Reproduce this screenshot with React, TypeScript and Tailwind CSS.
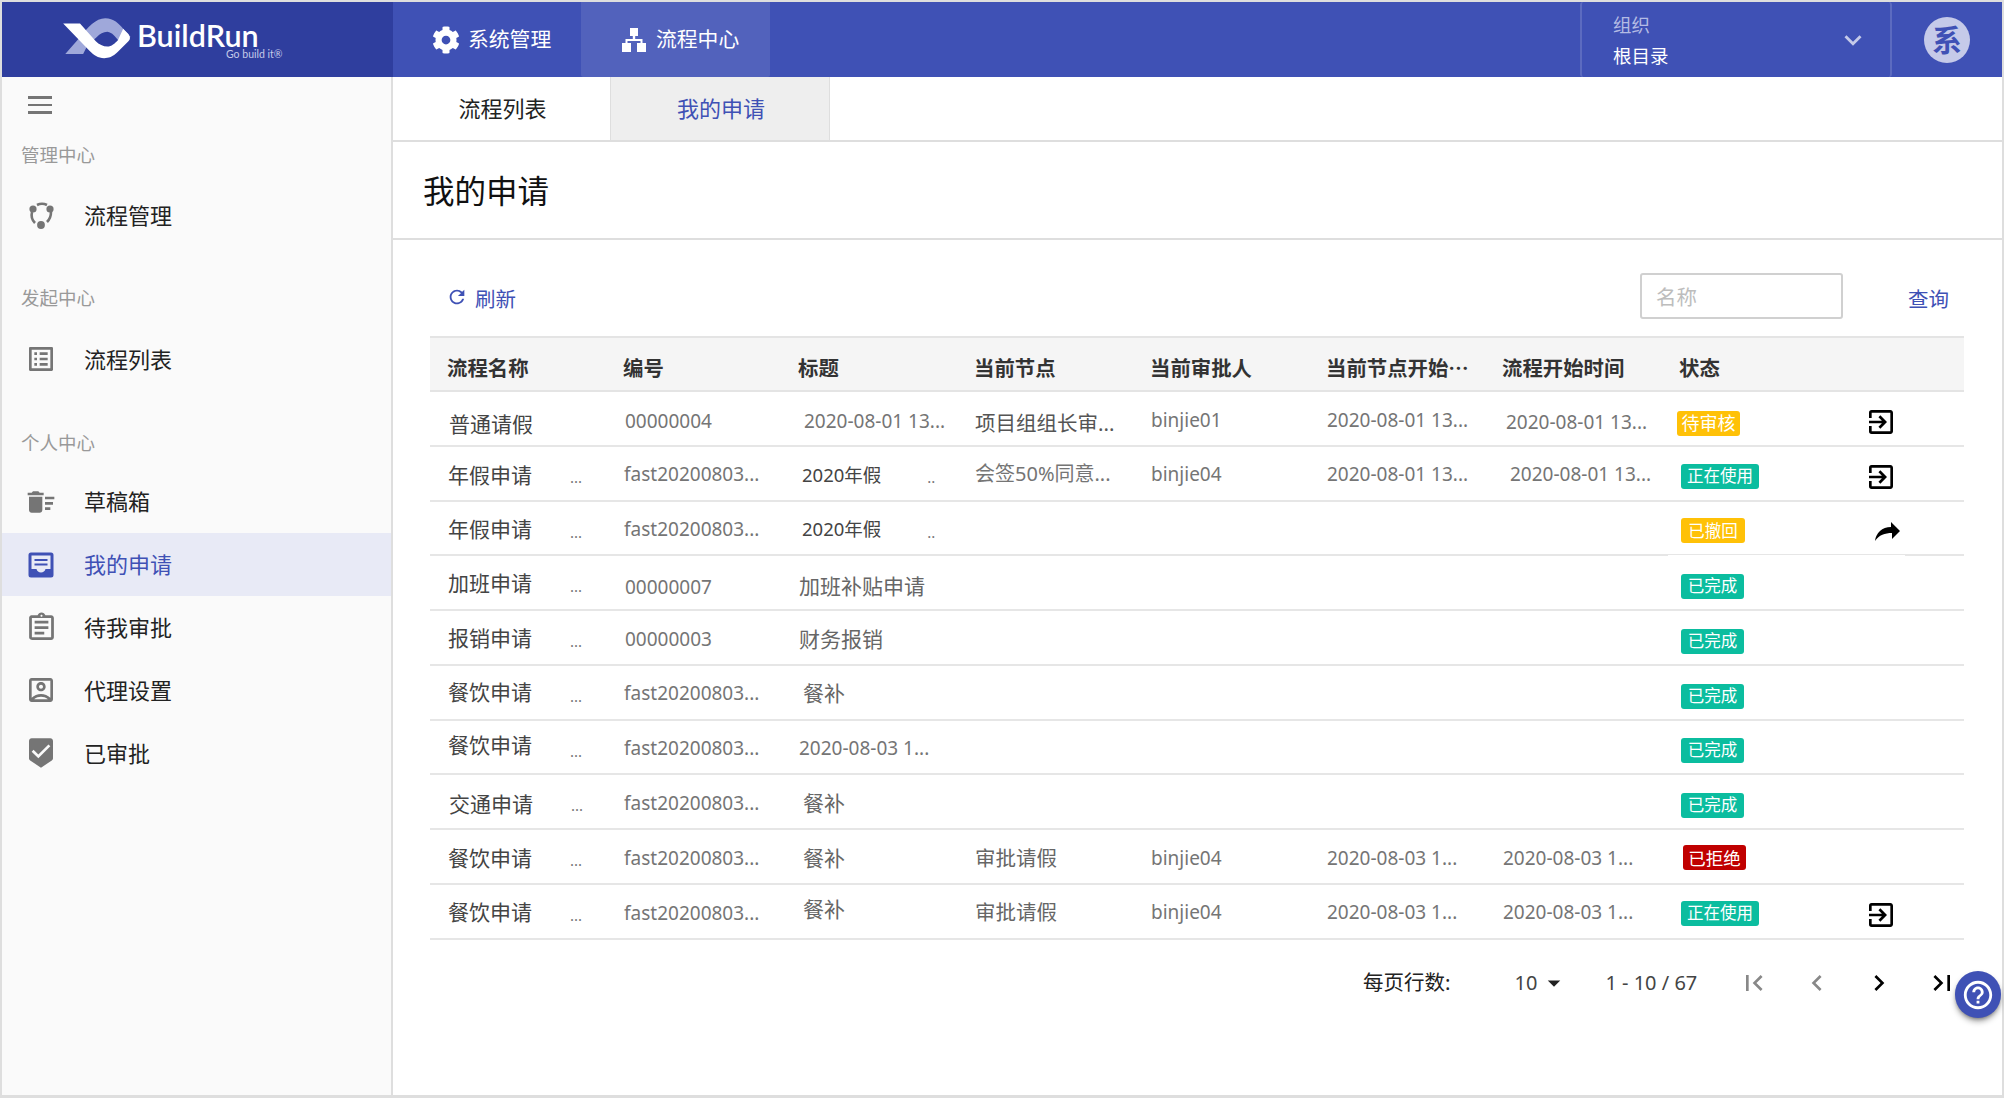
import { FaCog } from "react-icons/fa"
import {
  MdArrowDropDown,
  MdBeenhere,
  MdChevronLeft,
  MdChevronRight,
  MdDeleteSweep,
  MdExitToApp,
  MdExpandMore,
  MdFirstPage,
  MdHelpOutline,
  MdLastPage,
  MdOutlineAccountBox,
  MdOutlineAssignment,
  MdOutlineListAlt,
  MdRefresh,
} from "react-icons/md"

const font = "font-['Noto_Sans','Noto_Sans_CJK_SC',sans-serif]"

const LogoMark = () => (
  <svg viewBox="2 2 76 47.5" className="h-[50px] w-[80px] shrink-0">
    <path
      fill="#9fa8da"
      d="M7 39 L22 22 C28 14 36 5 45 5 C53 5 58 10 62 15 L69 23 L58 27 C54 22 52 19 47 18 C43 18 40 20 37 23 L28 31 L24 39 Z"
    />
    <path
      fill="#fff"
      d="M5 10 L21 10 L36 27 C39 30 43 32 47 32 C51 32 54 29 57 26 L62 15 L67 20 C69 23 69 25 67 27 L57 37 C52 42 48 43 44 43 C38 43 34 40 30 36 Z"
    />
  </svg>
)

const SitemapIcon = () => (
  <svg viewBox="0 0 24 24" className="h-[24px] w-[24px] shrink-0" fill="#fff">
    <path d="M8 0 H16 V8 H13.2 V11 H20.5 V15 H24 V24 H15 V15 H18.5 V13 H5.5 V15 H9 V24 H0 V15 H3.5 V11 H10.8 V8 H8 Z" />
  </svg>
)

const FlowIcon = () => (
  <svg viewBox="0 0 30 30" className="h-[30px] w-[30px]" fill="none" stroke="#757575" strokeWidth="2.6">
    <path d="M11 5 C14 3.5 18 3.5 21 5" />
    <path d="M6 12 C5 16 6 20 9 23" />
    <path d="M25 12 C25 16 24 19 21 22" />
    <circle cx="7" cy="9" r="3.6" fill="#757575" stroke="none" />
    <circle cx="24" cy="9" r="3.6" fill="#757575" stroke="none" />
    <circle cx="15" cy="25" r="3.9" fill="#757575" stroke="none" />
  </svg>
)

const InboxIcon = () => (
  <svg viewBox="0 0 26 26" className="h-[26px] w-[26px]">
    <path
      fill="#3f51b5"
      d="M3 0.5 H23 A2.5 2.5 0 0 1 25.5 3 V23 A2.5 2.5 0 0 1 23 25.5 H3 A2.5 2.5 0 0 1 0.5 23 V3 A2.5 2.5 0 0 1 3 0.5 Z"
    />
    <path
      fill="#e8eaf6"
      d="M3.5 3.5 H22.5 V17 H17.5 C17 19.2 15.2 20.5 13 20.5 C10.8 20.5 9 19.2 8.5 17 H3.5 Z"
    />
    <path fill="#3f51b5" d="M6.5 7 H19.5 V9 H6.5 Z M6.5 11.5 H19.5 V13.5 H6.5 Z" />
  </svg>
)

const ShareIcon = () => (
  <svg viewBox="0 0 25 19" className="ml-[10px] mt-[8px] h-[19px] w-[25px]" fill="#000">
    <path d="M16 0 L25 9 L17 17 V11 C10 11 4 13 0 19 C1 11 7 5 16 5 Z" />
  </svg>
)

type Cell = { text?: string; cls?: string; dots?: string }
type Row = {
  cells: (Cell | null)[]
  badge: { text: string; cls: string }
  action?: "exit" | "share"
  actionCls?: string
}

const ok = (cls = "") => ({ text: "已完成", cls: "w-[63px] bg-[#0bbd9f] text-[16.5px] " + cls })
const using = (cls = "") => ({ text: "正在使用", cls: "w-[78px] bg-[#0bbd9f] text-[16.5px] " + cls })

const rows: Row[] = [
  {
    cells: [
      { text: "普通请假", cls: "ml-[1px] mt-[12px]" },
      { text: "00000004", cls: "ml-[1px] mt-[6px]" },
      { text: "2020-08-01 13...", cls: "ml-[5px] mt-[5px]" },
      { text: "项目组组长审...", cls: "mt-[10px] text-[#555] text-[20.5px]" },
      { text: "binjie01", cls: "mt-[3px]" },
      { text: "2020-08-01 13...", cls: "mt-[3px]" },
      { text: "2020-08-01 13...", cls: "ml-[3px] mt-[7px]" },
    ],
    badge: { text: "待审核", cls: "w-[63px] bg-[#ffc107] text-[18px] -ml-[4px] mt-[10px]" },
    action: "exit",
    actionCls: "mt-[8px]",
  },
  {
    cells: [
      { text: "年假申请", dots: "ml-[38px]", cls: "mt-[5px]" },
      { text: "fast20200803...", cls: "mt-[3px]" },
      { text: "2020年假", dots: "ml-[46px]", cls: "ml-[3px] mt-[4px] text-[#444] text-[18.5px]" },
      { text: "会签50%同意...", cls: "mt-[2px] text-[20px]" },
      { text: "binjie04", cls: "mt-[3px]" },
      { text: "2020-08-01 13...", cls: "mt-[2px]" },
      { text: "2020-08-01 13...", cls: "ml-[7px] mt-[2px]" },
    ],
    badge: using("mt-[7px]"),
    action: "exit",
    actionCls: "mt-[8px]",
  },
  {
    cells: [
      { text: "年假申请", dots: "ml-[38px]", cls: "mt-[4px]" },
      { text: "fast20200803...", cls: "mt-[2px]" },
      { text: "2020年假", dots: "ml-[46px]", cls: "ml-[3px] mt-[1px] text-[#444] text-[18.5px]" },
      null,
      null,
      null,
      null,
    ],
    badge: { text: "已撤回", cls: "w-[64px] bg-[#ffc107] text-[16.5px] mt-[6px]" },
    action: "share",
  },
  {
    cells: [
      { text: "加班申请", dots: "ml-[38px]", cls: "mt-[3px]" },
      { text: "00000007", cls: "ml-[1px] mt-[9px]" },
      { text: "加班补贴申请", cls: "mt-[8px] text-[21px] text-[#666]" },
      null,
      null,
      null,
      null,
    ],
    badge: ok("mt-[8px]"),
  },
  {
    cells: [
      { text: "报销申请", dots: "ml-[38px]", cls: "mt-[3px]" },
      { text: "00000003", cls: "ml-[1px] mt-[4px]" },
      { text: "财务报销", cls: "mt-[4px] text-[21px] text-[#666]" },
      null,
      null,
      null,
      null,
    ],
    badge: ok("mt-[8px]"),
  },
  {
    cells: [
      { text: "餐饮申请", dots: "ml-[38px]", cls: "mt-[2px]" },
      { text: "fast20200803...", cls: "mt-[3px]" },
      { text: "餐补", cls: "ml-[4px] mt-[4px] text-[21px] text-[#666]" },
      null,
      null,
      null,
      null,
    ],
    badge: ok("mt-[8px]"),
  },
  {
    cells: [
      { text: "餐饮申请", dots: "ml-[38px]", cls: "-mt-[2px]" },
      { text: "fast20200803...", cls: "mt-[2px]" },
      { text: "2020-08-03 1...", cls: "mt-[2px]" },
      null,
      null,
      null,
      null,
    ],
    badge: ok("mt-[7px]"),
  },
  {
    cells: [
      { text: "交通申请", dots: "ml-[38px]", cls: "ml-[1px] mt-[6px]" },
      { text: "fast20200803...", cls: "mt-[3px]" },
      { text: "餐补", cls: "ml-[4px] mt-[4px] text-[21px] text-[#666]" },
      null,
      null,
      null,
      null,
    ],
    badge: ok("mt-[8px]"),
  },
  {
    cells: [
      { text: "餐饮申请", dots: "ml-[38px]", cls: "mt-[4px]" },
      { text: "fast20200803...", cls: "mt-[3px]" },
      { text: "餐补", cls: "ml-[4px] mt-[5px] text-[21px] text-[#666]" },
      { text: "审批请假", cls: "mt-[3px] text-[20.5px] text-[#666]" },
      { text: "binjie04", cls: "mt-[3px]" },
      { text: "2020-08-03 1...", cls: "mt-[3px]" },
      { text: "2020-08-03 1...", cls: "mt-[3px]" },
    ],
    badge: { text: "已拒绝", cls: "w-[63px] bg-[#c00000] text-[17.5px] ml-[2px] mt-[3px]" },
  },
  {
    cells: [
      { text: "餐饮申请", dots: "ml-[38px]", cls: "mt-[3px]" },
      { text: "fast20200803...", cls: "mt-[4px]" },
      { text: "餐补", cls: "ml-[4px] -mt-[3px] text-[21px] text-[#666]" },
      { text: "审批请假", cls: "mt-[3px] text-[20.5px] text-[#666]" },
      { text: "binjie04", cls: "mt-[3px]" },
      { text: "2020-08-03 1...", cls: "mt-[3px]" },
      { text: "2020-08-03 1...", cls: "mt-[3px]" },
    ],
    badge: using("mt-[5px]"),
    action: "exit",
    actionCls: "mt-[7px]",
  },
]

const headers = ["流程名称", "编号", "标题", "当前节点", "当前审批人", "当前节点开始⋯", "流程开始时间", "状态", ""]
const gridCols = "grid-cols-[176px_175px_176px_176px_176px_176px_177px_180px_122px]"

const SideItem = ({ icon, label, active }: { icon: React.ReactNode; label: string; active?: boolean }) => (
  <div className={`flex h-[62.8px] items-center ${active ? "bg-[#e8eaf6] text-[#3f51b5]" : "text-[#222]"}`}>
    <div className="flex w-[82px] shrink-0 justify-center pr-[4px] text-[#757575]">{icon}</div>
    <span className="text-[22px]">{label}</span>
  </div>
)

const SideLabel = ({ label, cls }: { label: string; cls: string }) => (
  <div className={`flex h-[44px] items-center pl-[19px] text-[18.5px] text-[#999] ${cls}`}>{label}</div>
)

export default function App() {
  return (
    <div className={`flex h-[1098px] w-[2004px] flex-col overflow-hidden bg-[#dedede] pb-[3px] pl-[2px] pr-[2px] pt-[2px] ${font}`}>
      {/* Header */}
      <header className="flex h-[75px] shrink-0 bg-[#3f51b5] text-white">
        <div className="flex w-[391px] shrink-0 items-center bg-[#2f3e9e] pl-[58px]">
          <LogoMark />
          <div className="-ml-[3px] mt-[3px] flex w-[146px] flex-col">
            <div className="h-[26px] font-['Lato',sans-serif] text-[30.5px] font-semibold leading-[26px]">BuildRun</div>
            <div className="h-[12px] whitespace-nowrap pl-[89px] font-['Lato',sans-serif] text-[10.5px] leading-[12px] text-[#c5cae9]">
              Go build it®
            </div>
          </div>
        </div>
        <div className="flex h-full w-[188px] items-center gap-[8px] pl-[39px] text-[20.8px]">
          <FaCog size={28} />
          系统管理
        </div>
        <div className="flex h-full w-[189px] items-center gap-[10px] rounded-b-[2px] bg-[#5262bc] pl-[41px] text-[20.8px]">
          <SitemapIcon />
          流程中心
        </div>
        <div className="ml-auto flex h-full w-[312px] items-center justify-between rounded-[3px] border-x-2 border-[#5c6bc0] pl-[31px] pr-[20px]">
          <div className="flex flex-col">
            <span className="mt-[2px] text-[18.5px] leading-[28px] text-[#b4bbe4]">组织</span>
            <span className="mt-[3px] text-[18.5px] leading-[28px]">根目录</span>
          </div>
          <MdExpandMore size={34} className="text-[#c5cae9]" />
        </div>
        <div className="flex w-[110px] items-center justify-center">
          <div className="flex h-[46px] w-[46px] items-center justify-center rounded-full bg-[#c5cae9] text-[30px] font-bold text-[#3f51b5]">
            系
          </div>
        </div>
      </header>

      <div className="flex min-h-0 flex-1">
        {/* Sidebar */}
        <aside className="w-[391px] shrink-0 border-r-2 border-[#dedede] bg-[#fafafa]">
          <div className="flex h-[56px] flex-col justify-center gap-[5px] pl-[26px]">
            <div className="h-[2.5px] w-[24px] bg-[#757575]" />
            <div className="h-[2.5px] w-[24px] bg-[#757575]" />
            <div className="h-[2.5px] w-[24px] bg-[#757575]" />
          </div>
          <SideLabel label="管理中心" cls="" />
          <div className="mt-[7px]">
            <SideItem icon={<FlowIcon />} label="流程管理" />
          </div>
          <SideLabel label="发起中心" cls="mt-[29px]" />
          <div className="mt-[8px]">
            <SideItem icon={<MdOutlineListAlt size={32} />} label="流程列表" />
          </div>
          <SideLabel label="个人中心" cls="mt-[30px]" />
          <div className="mt-[6px]">
            <SideItem icon={<MdDeleteSweep size={32} />} label="草稿箱" />
            <SideItem icon={<InboxIcon />} label="我的申请" active />
            <SideItem icon={<MdOutlineAssignment size={33} />} label="待我审批" />
            <SideItem icon={<MdOutlineAccountBox size={32} />} label="代理设置" />
            <SideItem icon={<MdBeenhere size={32} />} label="已审批" />
          </div>
        </aside>

        {/* Main */}
        <main className="min-w-0 flex-1 bg-white">
          <div className="flex h-[65px] border-b-2 border-[#dedede]">
            <div className="flex w-[218px] items-center justify-center border-r border-[#dedede] pl-[2px] text-[22px] text-[#222]">
              流程列表
            </div>
            <div className="flex w-[219px] items-center justify-center border-r border-[#dedede] bg-[#eeeeee] pl-[2px] text-[22px] text-[#3f51b5]">
              我的申请
            </div>
          </div>
          <div className="flex h-[98px] items-center border-b-2 border-[#dedede] pl-[30px] pt-[2px] text-[31.5px] text-[#111]">
            我的申请
          </div>

          <div className="pl-[37px] pr-[38px]">
            <div className="flex h-[96px] items-center pt-[16px]">
              <MdRefresh size={22} className="ml-[16px] mt-[2px] text-[#3f51b5]" />
              <span className="ml-[7px] mt-[6px] text-[20.5px] text-[#3f51b5]">刷新</span>
              <input
                placeholder="名称"
                className="ml-auto h-[46px] w-[203px] rounded-[3px] border-2 border-[#d0d0d0] px-[14px] pt-[2px] text-[20.5px] placeholder:text-[#bdbdbd]"
              />
              <span className="ml-[65px] mr-[15px] mt-[6px] text-[20.5px] text-[#3f51b5]">查询</span>
            </div>

            {/* Table */}
            <div className={`grid h-[56px] border-y-2 border-[#e4e4e4] bg-[#f5f5f5] text-[20.4px] font-bold text-[#333] ${gridCols}`}>
              {headers.map((h, i) => (
                <div key={i} className="flex items-center whitespace-nowrap pl-[17px] pt-[9px]">
                  {h}
                </div>
              ))}
            </div>
            {rows.map((row, i) => (
              <div key={i} className={`relative grid h-[54.75px] border-b-2 border-[#e6e6e6] text-[19px] text-[#757575] ${gridCols}`}>
                {row.cells.map((c, j) => (
                  <div key={j} className="flex items-center whitespace-nowrap pl-[18px]">
                    {c && (
                      <>
                        <span className={`${j === 0 ? "text-[21px] text-[#444]" : ""} ${c.cls ?? ""}`}>{c.text}</span>
                        {c.dots && <span className={`mt-[8px] text-[15px] ${c.dots}`}>{j === 2 ? ".." : "..."}</span>}
                      </>
                    )}
                  </div>
                ))}
                <div className="flex items-center pl-[19px]">
                  <span
                    className={`flex h-[25px] items-center justify-center whitespace-nowrap rounded-[3px] text-white ${row.badge.cls}`}
                  >
                    {row.badge.text}
                  </span>
                </div>
                <div className="flex items-center justify-start pl-[23px]">
                  {row.action === "exit" && <MdExitToApp size={32} className={`text-black ${row.actionCls ?? ""}`} />}
                  {row.action === "share" && <ShareIcon />}
                </div>
                {i === 2 && <div className="absolute -bottom-[2px] left-[1238px] h-[1px] w-[237px] bg-white" />}
              </div>
            ))}

            {/* Pagination */}
            <div className="flex h-[86px] items-center text-[20px] text-[#444]">
              <span className="ml-[933px] text-[20.5px] text-[#222]">每页行数:</span>
              <span className="ml-[64px]">10</span>
              <MdArrowDropDown size={30} className="ml-[2px] text-[#222]" />
              <span className="ml-[36px] whitespace-nowrap">1 - 10 / 67</span>
              <MdFirstPage size={32} className="ml-[41px] text-[#888]" />
              <MdChevronLeft size={32} className="ml-[31px] text-[#888]" />
              <MdChevronRight size={32} className="ml-[30px] text-black" />
              <MdLastPage size={32} className="ml-[31px] text-black" />
            </div>
          </div>
        </main>
      </div>

      {/* Help button */}
      <div className="fixed left-[1955px] top-[971px] flex h-[47px] w-[46px] items-center justify-center rounded-full bg-[#3f51b5] shadow-md shadow-black/40">
        <MdHelpOutline size={34} className="text-white" />
      </div>
    </div>
  )
}
